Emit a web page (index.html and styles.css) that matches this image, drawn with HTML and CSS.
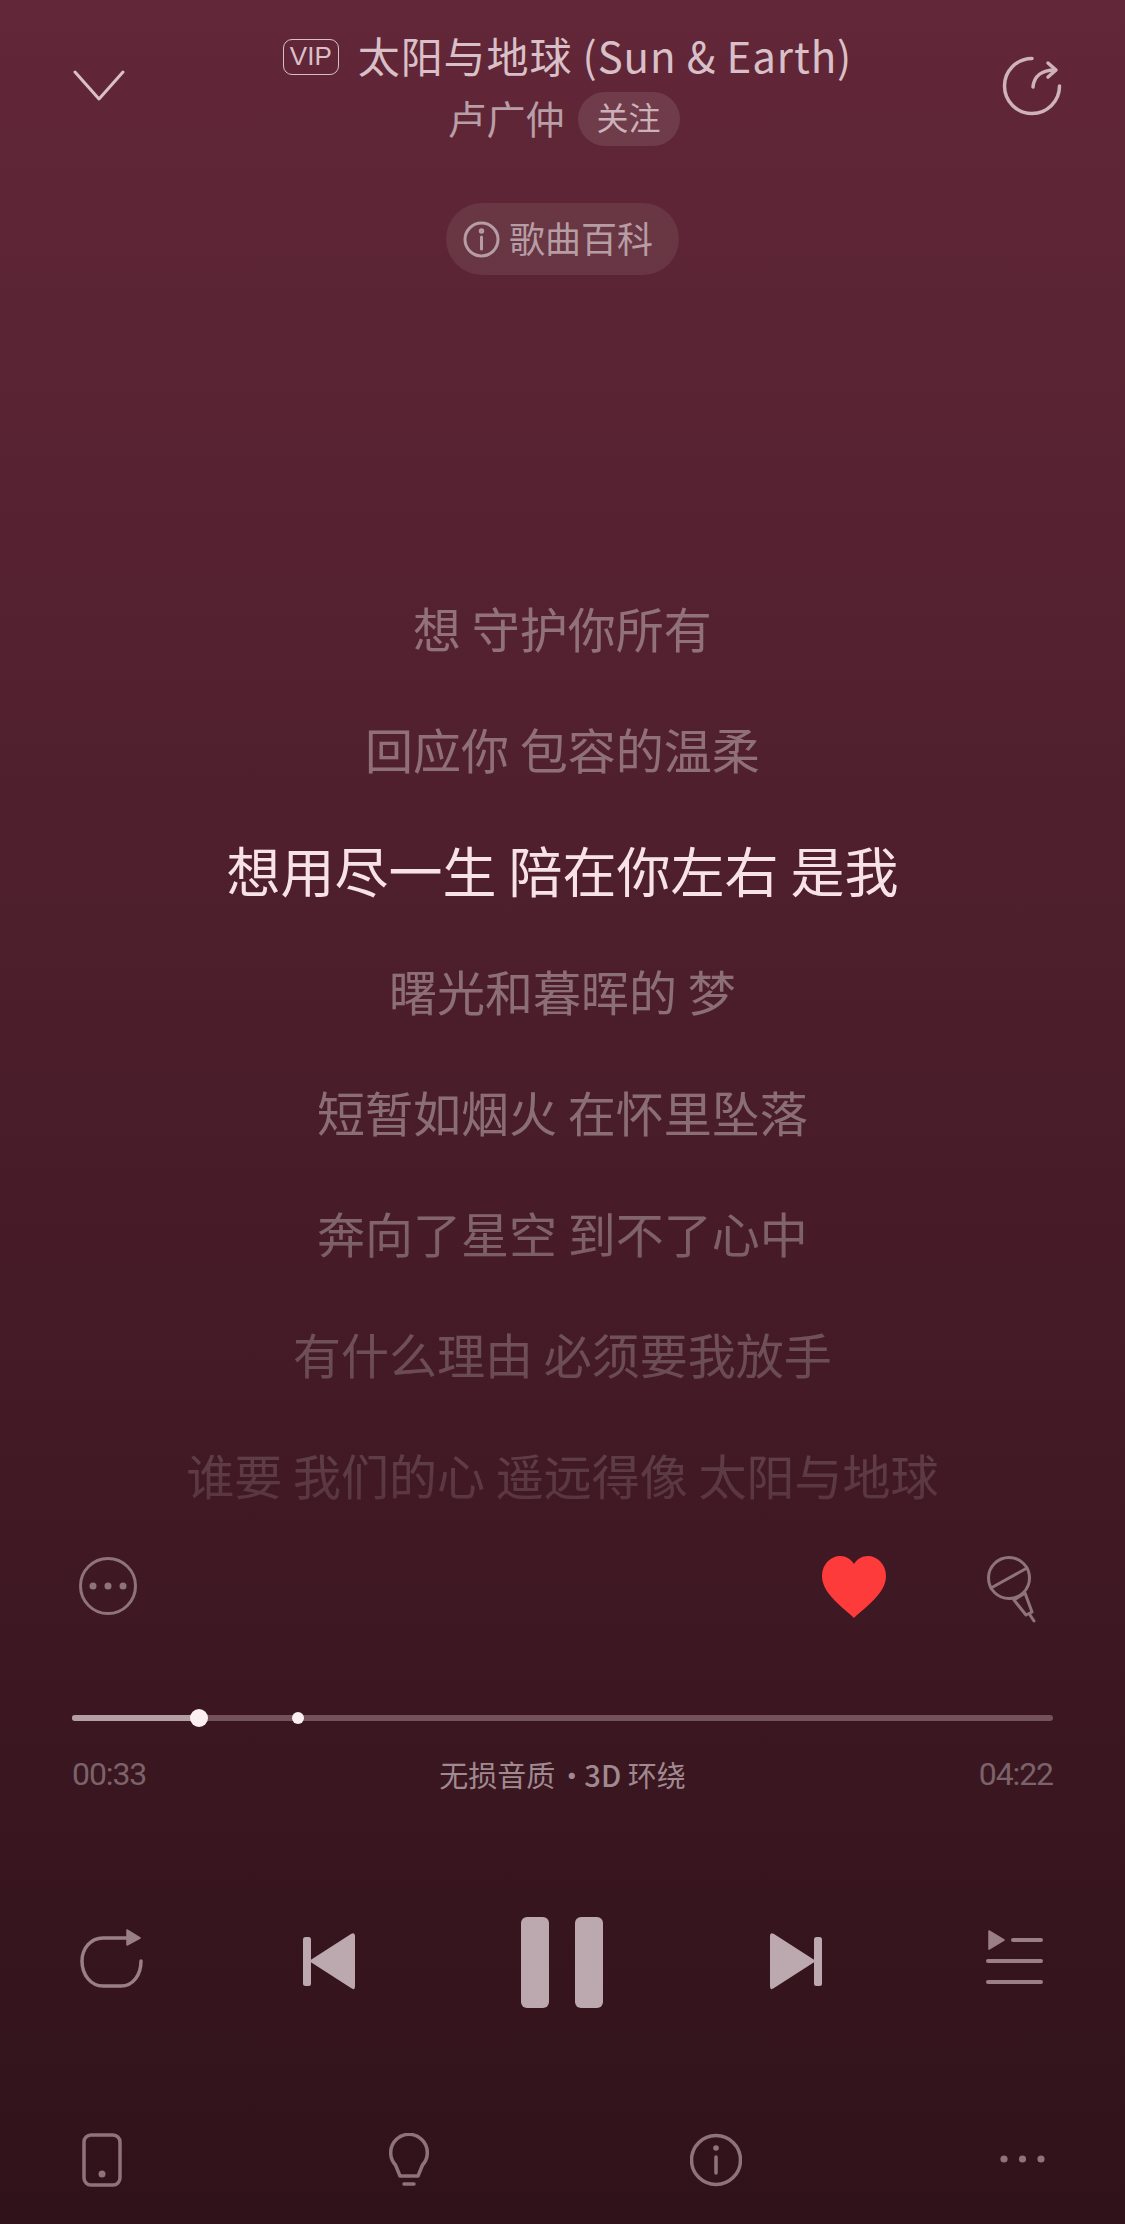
FILE: index.html
```html
<!DOCTYPE html>
<html lang="zh-CN">
<head>
    <meta charset="UTF-8">
    <meta name="viewport" content="width=device-width, initial-scale=1.0">
    <title>太阳与地球 (Sun &amp; Earth)</title>
    <link rel="stylesheet" href="styles.css">
</head>
<body>
    <div class="player">
        <header class="top-bar">
            <svg class="icon-chevron" width="52" height="32" viewBox="0 0 52 32" fill="none" stroke="#d9c0c8" stroke-width="3" stroke-linecap="round" stroke-linejoin="round">
                <path d="M2 2 L26 29 L50 2"/>
            </svg>
            <div class="song-info">
                <div class="song-title">
                    <span class="vip-badge">VIP</span>
                    <span class="song-name">太阳与地球 (Sun &amp; Earth)</span>
                </div>
                <div class="song-artist">
                    <span class="artist-name">卢广仲</span>
                    <span class="follow-button">关注</span>
                </div>
            </div>
            <svg class="icon-share" width="60" height="60" viewBox="0 0 60 60" fill="none" stroke="#cfb3bb" stroke-width="3.5" stroke-linecap="round" stroke-linejoin="round">
                <path d="M30 2.5 A27.5 27.5 0 1 0 57.5 30"/>
                <path d="M31 31 C32 20 40 14 53 14"/>
                <path d="M46 7 L54 14 L46 21"/>
            </svg>
        </header>

        <div class="wiki-row">
            <div class="wiki-pill">
                <svg width="37" height="37" viewBox="0 0 37 37" fill="none" stroke="#b69da4" stroke-width="3" stroke-linecap="round">
                    <circle cx="18.5" cy="18.5" r="16.5"/>
                    <path d="M18.5 16 V28"/>
                    <circle cx="18.5" cy="10" r="1.2"/>
                </svg>
                <span class="wiki-text">歌曲百科</span>
            </div>
        </div>

        <div class="lyrics">
            <p class="lyric-line">想 守护你所有</p>
            <p class="lyric-line">回应你 包容的温柔</p>
            <p class="lyric-line active">想用尽一生 陪在你左右 是我</p>
            <p class="lyric-line">曙光和暮晖的 梦</p>
            <p class="lyric-line">短暂如烟火 在怀里坠落</p>
            <p class="lyric-line">奔向了星空 到不了心中</p>
            <p class="lyric-line">有什么理由 必须要我放手</p>
            <p class="lyric-line">谁要 我们的心 遥远得像 太阳与地球</p>
        </div>

        <div class="actions">
            <svg width="58" height="60" viewBox="0 0 58 60" fill="none" stroke="#8f737b" stroke-width="3">
                <circle cx="29" cy="30" r="27.5"/>
                <circle cx="14" cy="30" r="3.5" fill="#8f737b" stroke="none"/>
                <circle cx="29" cy="30" r="3.5" fill="#8f737b" stroke="none"/>
                <circle cx="44" cy="30" r="3.5" fill="#8f737b" stroke="none"/>
            </svg>
            <div class="actions-right">
                <svg width="64" height="62" viewBox="0 0 64 62">
                    <path fill="#fe3b3b" d="M32 62 C22 52 0 38 0 20 C0 8 9 0 18 0 C24 0 29 3 32 8 C35 3 40 0 46 0 C55 0 64 8 64 20 C64 38 42 52 32 62 Z"/>
                </svg>
                <svg width="50" height="68" viewBox="0 0 50 68" fill="none" stroke="#8f737b" stroke-width="3" stroke-linecap="round" stroke-linejoin="round">
                    <circle cx="22" cy="22" r="20.5"/>
                    <path d="M4 32 L40 12"/>
                    <path d="M27 44 L38 37 L45 56 L39 59 Z"/>
                    <path d="M43 59 L47 65"/>
                </svg>
            </div>
        </div>

        <div class="progress">
            <div class="progress-played" style="width: 12.95%"></div>
            <span class="progress-thumb" style="left: 12.95%"></span>
            <span class="progress-mark" style="left: 23%"></span>
        </div>

        <div class="meta">
            <span class="time">00:33</span>
            <span class="quality">无损音质<i class="quality-dot">·</i><b>3D</b> 环绕</span>
            <span class="time">04:22</span>
        </div>

        <div class="controls">
            <svg width="63" height="92" viewBox="0 0 63 92" fill="none" stroke="#9a7f87" stroke-width="3.5" stroke-linecap="round">
                <path d="M48 22 H23 C11 22 2 32 2 45 C2 59 11 70 23 70 H41 C53 70 61 59 61 45"/>
                <path d="M47 14 L60 22 L47 29 Z" fill="#9a7f87" stroke="#9a7f87" stroke-width="1.5" stroke-linejoin="round"/>
            </svg>
            <svg width="54" height="92" viewBox="0 0 54 92" fill="#bca8af">
                <rect x="1" y="21" width="8" height="49" rx="2.5"/>
                <path d="M7 45 L49 18 Q53 16 53 20 V70 Q53 75 49 72 Z"/>
            </svg>
            <div class="pause">
                <span class="pause-bar"></span>
                <span class="pause-bar"></span>
            </div>
            <svg class="icon-next" width="54" height="92" viewBox="0 0 54 92" fill="#bca8af">
                <rect x="1" y="21" width="8" height="49" rx="2.5"/>
                <path d="M7 45 L49 18 Q53 16 53 20 V70 Q53 75 49 72 Z"/>
            </svg>
            <svg width="57" height="92" viewBox="0 0 57 92" fill="none" stroke="#9a7f87" stroke-width="4" stroke-linecap="round">
                <path d="M3 15 L18 24 L3 33 Z" fill="#9a7f87" stroke="#9a7f87" stroke-width="1.5" stroke-linejoin="round"/>
                <path d="M27 24 H55"/>
                <path d="M2 45 H55"/>
                <path d="M2 66 H55"/>
            </svg>
        </div>

        <div class="bottom-bar">
            <svg width="40" height="54" viewBox="0 0 40 54" fill="none" stroke="#8f737b" stroke-width="3.5">
                <rect x="2" y="2" width="36" height="50" rx="7"/>
                <circle cx="20" cy="41" r="3.5" fill="#8f737b" stroke="none"/>
            </svg>
            <svg width="40" height="54" viewBox="0 0 40 54" fill="none" stroke="#8f737b" stroke-width="3.5" stroke-linecap="round" stroke-linejoin="round">
                <path d="M11 43 L6.5 32 A18.3 18.3 0 1 1 33.5 32 L29 43 Z"/>
                <path d="M15 51 H25"/>
            </svg>
            <svg width="52" height="54" viewBox="0 0 52 54" fill="none" stroke="#8f737b" stroke-width="3.5" stroke-linecap="round">
                <circle cx="26" cy="27" r="24.5"/>
                <path d="M26 24 V40"/>
                <circle cx="26" cy="15" r="2.8" fill="#8f737b" stroke="none"/>
            </svg>
            <svg width="45" height="54" viewBox="0 0 45 54" fill="#8f737b">
                <circle cx="4" cy="26" r="3.6"/>
                <circle cx="22.5" cy="26" r="3.6"/>
                <circle cx="41" cy="26" r="3.6"/>
            </svg>
        </div>
    </div>
</body>
</html>
```

FILE: styles.css
```css
body {
    margin: 0;
    font-family: "Noto Sans CJK SC", "Noto Sans", sans-serif;
    background: #30121a;
}

svg {
    display: block;
    flex-shrink: 0;
}

.player {
    width: 1125px;
    height: 2224px;
    overflow: hidden;
    background: linear-gradient(to bottom, #622738, #30121a);
}

.top-bar {
    display: grid;
    grid-template-columns: 1fr auto 1fr;
    padding: 39px 63px 0 73px;
}

.icon-chevron {
    margin-top: 31px;
}

.icon-share {
    margin-top: 17px;
    justify-self: end;
}

.song-info {
    display: flex;
    flex-direction: column;
    align-items: center;
}

.song-title {
    display: flex;
    align-items: center;
    gap: 19px;
    height: 36px;
    font-size: 42px;
    color: #d9c0c8;
    white-space: nowrap;
}

.song-name {
    padding-bottom: 6px;
    letter-spacing: 0.9px;
}

.vip-badge {
    box-sizing: border-box;
    width: 56px;
    height: 36px;
    border: 1.5px solid #d9c0c8;
    border-radius: 9px;
    font-family: "Liberation Sans", sans-serif;
    font-size: 26px;
    line-height: 33px;
    text-align: center;
}

.song-artist {
    display: flex;
    align-items: center;
    gap: 13px;
    height: 54px;
    margin: 17px 8px 0 0;
    font-size: 39px;
    color: #b89ea6;
}

.artist-name {
    padding-bottom: 4px;
}

.follow-button {
    width: 102px;
    height: 54px;
    border-radius: 27px;
    background: rgba(255, 255, 255, 0.1);
    font-size: 32px;
    line-height: 49px;
    text-align: center;
    color: #cdb1b9;
}

.wiki-row {
    display: flex;
    justify-content: center;
    margin-top: 57px;
}

.wiki-pill {
    display: flex;
    align-items: center;
    gap: 9px;
    box-sizing: border-box;
    width: 233px;
    height: 72px;
    padding-left: 17px;
    border-radius: 36px;
    background: rgba(255, 255, 255, 0.08);
    font-size: 36px;
    color: #b69da4;
}

.wiki-text {
    padding-bottom: 5px;
}

.lyrics {
    height: 971px;
    padding-top: 292px;
    -webkit-mask-image: linear-gradient(to bottom, #000 70%, transparent 112%);
    mask-image: linear-gradient(to bottom, #000 70%, transparent 112%);
}

.lyric-line {
    margin: 0;
    height: 121px;
    line-height: 121px;
    font-size: 48px;
    text-align: center;
    white-space: nowrap;
    color: rgba(255, 255, 255, 0.36);
}

.lyric-line.active {
    font-size: 54px;
    color: #f7e3e7;
}

.actions {
    display: flex;
    justify-content: space-between;
    align-items: flex-start;
    height: 68px;
    margin-top: 18px;
    padding: 0 88px 0 79px;
}

.actions-right {
    display: flex;
    gap: 101px;
}

.progress {
    position: relative;
    height: 6px;
    margin: 91px 72px 0;
    border-radius: 3px;
    background: #735359;
}

.progress-played {
    height: 100%;
    border-radius: 3px;
    background: #b39fa5;
}

.progress-thumb,
.progress-mark {
    position: absolute;
    top: 50%;
    border-radius: 50%;
    background: #fbeff2;
    transform: translate(-50%, -50%);
}

.progress-thumb {
    width: 18px;
    height: 18px;
}

.progress-mark {
    width: 12px;
    height: 12px;
}

.meta {
    display: flex;
    justify-content: space-between;
    align-items: center;
    height: 36px;
    margin-top: 35px;
    padding: 0 72px;
}

.time {
    font-family: Roboto, sans-serif;
    font-size: 32px;
    letter-spacing: -1.1px;
    color: #7c626a;
}

.quality {
    font-size: 29px;
    color: #a08a90;
}

.quality b {
    font-weight: 500;
}

.quality-dot {
    margin: 0 -2px 0 2px;
    font-style: normal;
}

.controls {
    display: grid;
    grid-template-columns: 222px 219px 248px 217px auto;
    align-items: center;
    margin-top: 124px;
    padding-left: 80px;
}

.pause {
    display: flex;
    gap: 26px;
}

.pause-bar {
    width: 28px;
    height: 91px;
    border-radius: 6px;
    background: #bca8af;
}

.icon-next {
    transform: scaleX(-1);
}

.bottom-bar {
    display: grid;
    grid-template-columns: 307px 301px 310px auto;
    align-items: center;
    margin-top: 125px;
    padding-left: 82px;
}
```
